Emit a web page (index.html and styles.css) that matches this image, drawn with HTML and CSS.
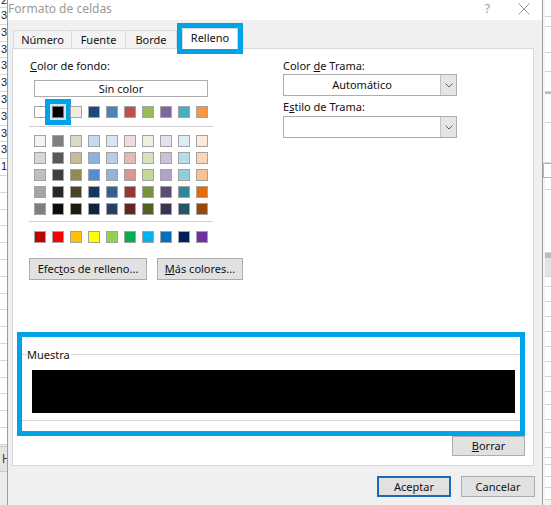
FILE: index.html
```html
<!DOCTYPE html>
<html lang="es">
<head>
    <meta charset="UTF-8">
    <title>Formato de celdas</title>
    <link rel="stylesheet" href="styles.css">
</head>
<body>
    <div class="screen">
        <div class="sheet sheet-left"></div>

        <div class="dialog">
            <div class="titlebar">
                <span class="title">Formato de celdas</span>
                <span class="help">?</span>
                <svg class="close" width="12" height="12" viewBox="0 0 12 12">
                    <path d="M0.5 0.5 L11.5 11.5 M11.5 0.5 L0.5 11.5" stroke="#9a9a9a" stroke-width="1" fill="none"/>
                </svg>
            </div>

            <div class="dialog-body">
                <div class="tabs">
                    <div class="tab tab-num">Número</div>
                    <div class="tab tab-font">Fuente</div>
                    <div class="tab tab-border">Borde</div>
                    <div class="tab active">Relleno</div>
                </div>

                <div class="panel">
                    <div class="panel-cols">
                        <div class="col-left">
                            <div class="label"><u>C</u>olor de fondo:</div>
                            <div class="btn-nocolor">Sin color</div>
                            <div class="swatch-row" id="theme-row"></div>
                            <div class="sep sep-top"></div>
                            <div class="swatch-grid" id="tint-grid"></div>
                            <div class="sep sep-bottom"></div>
                            <div class="swatch-row std-row" id="std-row"></div>
                            <div class="btn-row">
                                <div class="btn btn-effects">Efec<u>t</u>os de relleno...</div>
                                <div class="btn btn-more"><u>M</u>ás colores...</div>
                            </div>
                        </div>
                        <div class="col-right">
                            <div class="label">Color <u>d</u>e Trama:</div>
                            <div class="select">
                                <div class="select-text">Automático</div>
                                <div class="select-btn">
                                    <svg width="8" height="5" viewBox="0 0 8 5"><path d="M0.5 0.5 L4 4 L7.5 0.5" stroke="#606060" fill="none"/></svg>
                                </div>
                            </div>
                            <div class="label label-style">E<u>s</u>tilo de Trama:</div>
                            <div class="select select-style">
                                <div class="select-text"></div>
                                <div class="select-btn">
                                    <svg width="8" height="5" viewBox="0 0 8 5"><path d="M0.5 0.5 L4 4 L7.5 0.5" stroke="#606060" fill="none"/></svg>
                                </div>
                            </div>
                        </div>
                    </div>

                    <div class="sample-mark">
                        <fieldset class="sample">
                            <legend>Muestra</legend>
                            <div class="sample-fill"></div>
                        </fieldset>
                    </div>

                    <div class="clear-row">
                        <div class="btn btn-clear"><u>B</u>orrar</div>
                    </div>
                </div>

                <div class="footer">
                    <div class="btn btn-ok">Aceptar</div>
                    <div class="btn btn-cancel">Cancelar</div>
                </div>
            </div>
        </div>

        <div class="sheet sheet-right"></div>
    </div>

    <script>
        // colores del tema (Office)
        let theme = ['#ffffff','#000000','#eeece1','#1f497d','#4f81bd','#c0504d','#9bbb59','#8064a2','#4bacc6','#f79646'];
        let tints = [
            ['#f2f2f2','#7f7f7f','#ddd9c3','#c6d9f0','#dbe5f1','#f2dcdb','#ebf1dd','#e5e0ec','#dbeef3','#fdeada'],
            ['#d8d8d8','#595959','#c4bd97','#8db3e2','#b8cce4','#e5b9b7','#d7e3bc','#ccc1d9','#b7dde8','#fbd5b5'],
            ['#bfbfbf','#3f3f3f','#938953','#548dd4','#95b3d7','#d99694','#c3d69b','#b2a2c7','#92cddc','#fac08f'],
            ['#a5a5a5','#262626','#494429','#17365d','#366092','#953734','#76923c','#5f497a','#31859b','#e36c09'],
            ['#7f7f7f','#0c0c0c','#1d1b10','#0f243e','#244061','#632423','#4f6128','#3f3151','#205867','#974806']
        ];
        let standard = ['#c00000','#ff0000','#ffc000','#ffff00','#92d050','#00b050','#00b0f0','#0070c0','#002060','#7030a0'];

        function fillRow(row, colors, selected){
            colors.forEach(function(c, i){
                let s = document.createElement('span');
                s.classList.add('swatch');
                if(i === selected){
                    s.classList.add('selected');
                }
                s.style.backgroundColor = c;
                row.append(s);
            });
        }

        fillRow(document.querySelector('#theme-row'), theme, 1);
        let grid = document.querySelector('#tint-grid');
        for(let r of tints){
            let row = document.createElement('div');
            row.classList.add('swatch-row');
            fillRow(row, r, -1);
            grid.append(row);
        }
        fillRow(document.querySelector('#std-row'), standard, -1);

        // hoja de excel detrás del diálogo
        let left = document.querySelector('.sheet-left');
        let nums = ['2','3','3','3','3','3','3','3','3','3','1'];
        for(let i=0;i<27;i++){
            let cell = document.createElement('div');
            cell.classList.add('cell');
            cell.textContent = nums[i] || '';
            left.append(cell);
        }
        let tab = document.createElement('div');
        tab.classList.add('sheet-tab');
        tab.textContent = 'H';
        left.append(tab);

        let right = document.querySelector('.sheet-right');
        let rows = [17,10,26,19,20,2,29,40,15,12,63,5,19,10,15,15,15,15,15,15,15,13,15,13,15,10,7,12,11,12];
        rows.forEach(function(h, i){
            let cell = document.createElement('div');
            cell.classList.add('rcell');
            if(i === 5 || i === 11){
                cell.classList.add('dark');
            }
            if(i === 12){
                cell.classList.add('grey');
            }
            if(i === 8){
                cell.classList.add('boxed');
            }
            cell.style.height = h + 'px';
            right.append(cell);
        });
    </script>
</body>
</html>
```

FILE: styles.css
```css
* {
    margin: 0;
    padding: 0;
    box-sizing: border-box;
}
body {
    width: 551px;
    height: 505px;
    overflow: hidden;
    background: #fff;
    font-family: "Noto Sans", "Liberation Sans", sans-serif;
    font-size: 11px;
    color: #111;
}
.screen {
    display: flex;
    height: 505px;
}

/* hoja de fondo */
.sheet {
    overflow: hidden;
    background: #fff;
    display: flex;
    flex-direction: column;
}
.sheet-left {
    width: 7px;
    background: #ececec;
}
.cell {
    flex: none;
    height: 16.8px;
    border-bottom: 1px solid #d8d8d8;
    background: #fff;
    font-family: "Liberation Sans", sans-serif;
    font-size: 11px;
    line-height: 14px;
    text-align: right;
    color: #222;
}
.cell:first-child {
    height: 8px;
    line-height: 0;
    overflow: hidden;
}
.sheet-tab {
    flex: none;
    height: 26px;
    margin-top: 1px;
    background: #e4e4e4;
    border-top: 1px solid #c8c8c8;
    border-bottom: 1px solid #c8c8c8;
    font-family: "Liberation Sans", sans-serif;
    font-size: 12px;
    line-height: 24px;
    padding-left: 2px;
    color: #444;
}
.sheet-right {
    width: 8px;
    background: #f3f3f3;
}
.rcell {
    flex: none;
    border-bottom: 1px solid #d4d4d4;
    margin-left: 2px;
    background: #fff;
}
.rcell.dark {
    background: #bdbdbd;
    border: 0;
}
.rcell.grey {
    background: #e3e3e3;
}
.rcell.boxed {
    border: 1px solid #b5b5b5;
    border-right: 0;
    margin-left: 0;
}

/* dialogo */
.dialog {
    width: 536px;
    display: flex;
    flex-direction: column;
    background: #f0f0f0;
    border-left: 1px solid #9e9e9e;
    border-right: 1px solid #9e9e9e;
}
.titlebar {
    height: 20px;
    flex: none;
    display: flex;
    align-items: center;
    background: #fff;
    color: #9a9a9a;
}
.title {
    font-size: 12px;
    margin-top: -3px;
}
.help {
    margin-left: auto;
    margin-right: 28px;
    margin-top: -3px;
    font-size: 12px;
    color: #9a9a9a;
}
.close {
    margin-right: 12px;
    margin-top: -3px;
}
.dialog-body {
    flex: 1;
    padding: 8px 7px 0 4px;
    display: flex;
    flex-direction: column;
}

/* pestañas */
.tabs {
    display: flex;
    align-items: flex-end;
    height: 20px;
    margin-left: 1px;
}
.tab {
    height: 18px;
    border: 1px solid #d9d9d9;
    border-bottom: 0;
    border-right: 0;
    background: #f3f3f3;
    text-align: center;
    line-height: 17px;
}
.tab-num {
    width: 58px;
}
.tab-font {
    width: 54px;
}
.tab-border {
    width: 52px;
    border-right: 1px solid #d9d9d9;
}
.tab.active {
    width: 56px;
    height: 21px;
    margin-left: 5px;
    margin-bottom: -1px;
    background: #fff;
    border-right: 1px solid #d9d9d9;
    line-height: 17px;
    outline: 5px solid #00a2e8;
    position: relative;
    z-index: 2;
}

/* panel */
.panel {
    height: 418px;
    flex: none;
    margin-right: 1px;
    background: #fff;
    border: 1px solid #d9d9d9;
    display: flex;
    flex-direction: column;
}
.panel-cols {
    display: flex;
    padding-top: 9px;
}
.col-left {
    width: 270px;
    padding-left: 17px;
}
.label {
    line-height: 15px;
    height: 15px;
}
.btn-nocolor {
    width: 174px;
    height: 17px;
    margin: 7px 0 0 4px;
    border: 1px solid #adadad;
    background: #fff;
    text-align: center;
    line-height: 15px;
}
.swatch-row {
    display: flex;
    gap: 6px;
}
#theme-row {
    margin: 9px 0 0 4px;
}
.swatch-grid {
    display: flex;
    flex-direction: column;
    gap: 5px;
    margin: 8px 0 0 4px;
}
.std-row {
    margin: 9px 0 0 4px;
}
.swatch {
    width: 12px;
    height: 12px;
    border: 1px solid #a3a3a3;
}
.swatch.selected {
    border-color: #7a7a7a;
    box-shadow: 0 0 0 2px #cfe3f4;
    outline: 5px solid #00a2e8;
    outline-offset: 2px;
}
.sep {
    width: 184px;
    height: 1px;
    margin-left: -1px;
    background: #d2d2d2;
}
.sep-top {
    margin-top: 8px;
}
.sep-bottom {
    margin-top: 6px;
}
.btn-row {
    display: flex;
    gap: 10px;
    margin: 15px 0 0 -1px;
}
.btn {
    height: 22px;
    border: 1px solid #adadad;
    background: #e1e1e1;
    text-align: center;
    line-height: 20px;
}
.btn-effects {
    width: 118px;
}
.btn-more {
    width: 86px;
}
.col-right {
    flex: 1;
}
.select {
    display: flex;
    width: 174px;
    height: 22px;
    margin-top: 1px;
    border: 1px solid #adadad;
    background: #fff;
}
.select-text {
    flex: 1;
    text-align: center;
    line-height: 20px;
}
.select-btn {
    width: 16px;
    background: #e5e5e5;
    border-left: 1px solid #c4c4c4;
    display: flex;
    align-items: center;
    justify-content: center;
}
.label-style {
    margin-top: 3px;
}
.select-style {
    margin-top: 2px;
}

/* muestra */
.sample-mark {
    width: 508px;
    margin: 52px 0 0 4px;
    border: 5px solid #00a2e8;
}
.sample {
    margin: 10px 0 10px 0;
    padding: 8px 5px 7px 0;
    border: 0;
    border-top: 1px solid #d5d5d5;
    border-bottom: 1px solid #d5d5d5;
}
.sample legend {
    margin-left: 5px;
    line-height: 15px;
    padding: 0 1px 0 0;
}
.sample-fill {
    height: 43px;
    margin-left: 10px;
    background: #000;
}
.clear-row {
    display: flex;
    justify-content: flex-end;
    padding-right: 8px;
}
.btn-clear {
    width: 73px;
    height: 20px;
    line-height: 18px;
}

/* botones de abajo */
.footer {
    display: flex;
    justify-content: flex-end;
    gap: 10px;
    margin-top: 10px;
}
.btn-ok,
.btn-cancel {
    width: 74px;
    height: 21px;
    line-height: 19px;
}
.btn-ok {
    border: 2px solid #1a6bb5;
    line-height: 17px;
}
```
